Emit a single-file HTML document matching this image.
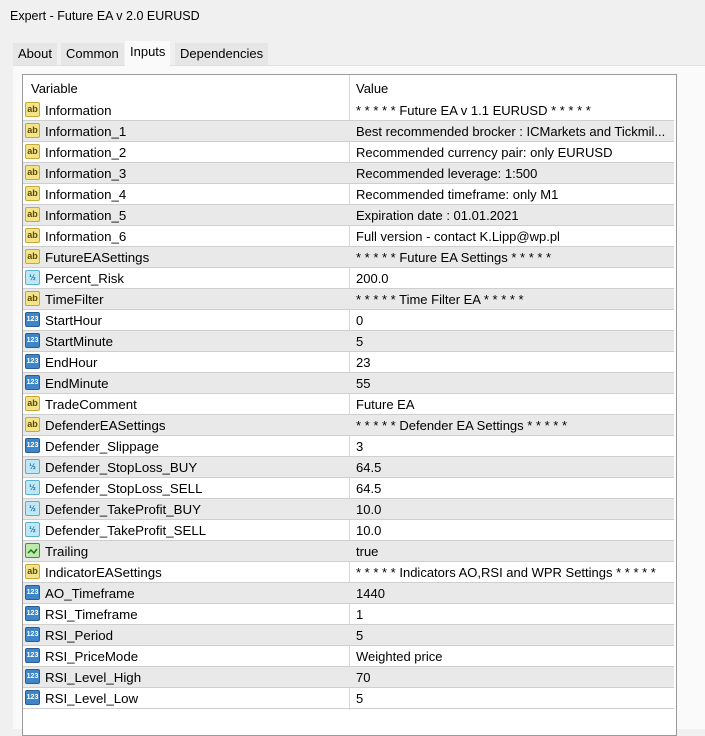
<!DOCTYPE html>
<html><head><style>
body{margin:0;width:705px;height:728px;background:#f0f0f0;font-family:"Liberation Sans",sans-serif;font-size:12.5px;color:#000;position:relative;overflow:hidden}
.title{position:absolute;left:10px;top:9px;font-size:12.5px}
.tabs{position:absolute;top:41px;left:13px;height:24px}
.tab{position:absolute;top:2px;height:22px;line-height:22px;background:#e6e6e6;padding:0 5px;font-size:13px}
.tab.act{top:0;height:25px;line-height:22px;background:#fafafa}
.panel{position:absolute;left:13px;top:65px;width:692px;height:663px;background:#fafafa;border-top:1px solid #e0e0e0}
.box{position:absolute;left:22px;top:74px;width:653px;height:660px;background:#fff;border:1px solid #9a9a9a}
.hdr{position:absolute;left:0;top:0;width:653px;height:25px}
.hdr span{position:absolute;top:6px;font-size:13px}
.vline{position:absolute;left:326px;top:0;width:1px;height:635px;background:#d8d8d8}
.row{position:absolute;left:0;width:651px;height:20px;border-bottom:1px solid #cfcfcf}
.row.g{background:#e9e9e9}
.row .n{position:absolute;left:22px;top:3px;font-size:13.3px}
.row .v{position:absolute;left:333px;top:3px;font-size:13px;white-space:nowrap}
.ic{position:absolute;left:2px;top:2px;width:15px;height:15px;border-radius:2px;font-size:8px;line-height:15px;text-align:center;font-weight:bold}
.ab{background:#f3e38a;border:1px solid #c8a836;width:13px;height:13px;line-height:13px;color:#5a4a00;font-size:9px}
.hf{background:#bfe8f5;border:1px solid #5ab0d0;width:13px;height:13px;line-height:13px;color:#1b6a9a}
.nm{background:#3f86c8;border:1px solid #2a5e96;width:13px;height:13px;line-height:13px;color:#fff;font-size:7px}
.bl{background:#bfe8b0;border:1px solid #3a9a30;width:13px;height:13px}
</style></head><body>
<div class="title">Expert - Future EA v 2.0 EURUSD</div>
<div class="panel"></div>
<div class="tabs">
<div class="tab" style="left:0">About</div>
<div class="tab" style="left:48px">Common</div>
<div class="tab act" style="left:112px">Inputs</div>
<div class="tab" style="left:162px">Dependencies</div>
</div>
<div class="box">
<div class="hdr"><span style="left:8px">Variable</span><span style="left:333px">Value</span></div>
<div class="vline"></div>
<div id="rows"></div>
</div>
<script>
var d=[["ab","Information","* * * * * Future EA v 1.1 EURUSD * * * * *"],
["ab","Information_1","Best recommended brocker : ICMarkets and Tickmil..."],
["ab","Information_2","Recommended currency pair: only EURUSD"],
["ab","Information_3","Recommended leverage: 1:500"],
["ab","Information_4","Recommended timeframe: only M1"],
["ab","Information_5","Expiration date : 01.01.2021"],
["ab","Information_6","Full version - contact K.Lipp@wp.pl"],
["ab","FutureEASettings","* * * * * Future EA Settings * * * * *"],
["hf","Percent_Risk","200.0"],
["ab","TimeFilter","* * * * * Time Filter EA * * * * *"],
["nm","StartHour","0"],["nm","StartMinute","5"],["nm","EndHour","23"],["nm","EndMinute","55"],
["ab","TradeComment","Future EA"],
["ab","DefenderEASettings","* * * * * Defender EA Settings * * * * *"],
["nm","Defender_Slippage","3"],
["hf","Defender_StopLoss_BUY","64.5"],["hf","Defender_StopLoss_SELL","64.5"],
["hf","Defender_TakeProfit_BUY","10.0"],["hf","Defender_TakeProfit_SELL","10.0"],
["bl","Trailing","true"],
["ab","IndicatorEASettings","* * * * * Indicators AO,RSI and WPR Settings * * * * *"],
["nm","AO_Timeframe","1440"],["nm","RSI_Timeframe","1"],["nm","RSI_Period","5"],
["nm","RSI_PriceMode","Weighted price"],["nm","RSI_Level_High","70"],["nm","RSI_Level_Low","5"]];
var t={ab:"ab",hf:"½",nm:"123",bl:"<svg width='13' height='13'><path d='M2 9 L5 6 L8 9 L11 5' stroke='#1a7a10' stroke-width='1.5' fill='none'/></svg>"};
var h="";d.forEach(function(r,i){h+='<div class="row'+(i%2?' g':'')+'" style="top:'+(25+i*21)+'px"><div class="ic '+r[0]+'">'+t[r[0]]+'</div><span class="n">'+r[1]+'</span><span class="v">'+r[2]+'</span></div>';});
document.getElementById("rows").innerHTML=h;
</script>
</body></html>
